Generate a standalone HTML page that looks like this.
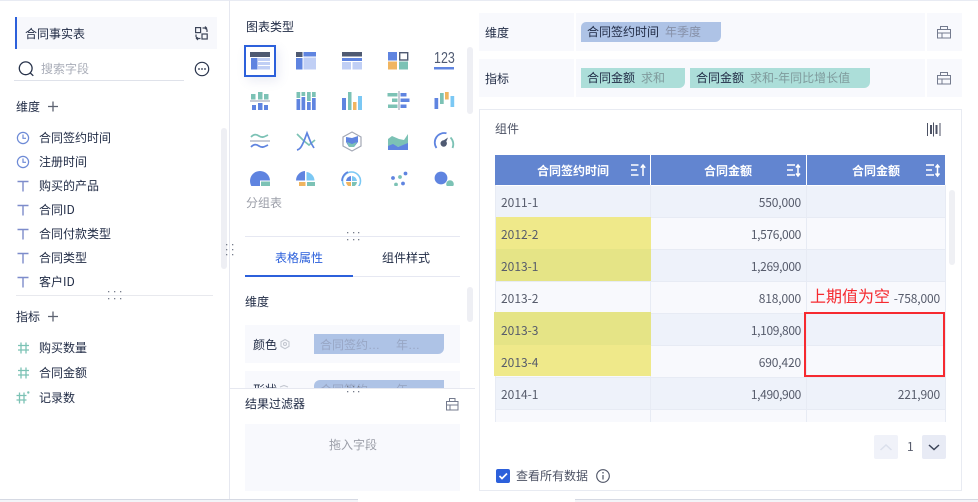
<!DOCTYPE html>
<html lang="zh"><head><meta charset="utf-8"><style>
html,body{margin:0;padding:0;background:#fff}
#p{position:relative;width:978px;height:502px;overflow:hidden;background:#fff;font-family:"Noto Sans CJK SC","Liberation Sans",sans-serif;font-size:12px;color:#1f2a44}
.t{position:absolute;white-space:nowrap;line-height:16px;margin-top:1px}
.b{position:absolute}
.g{color:#9b9ea8}
.r{text-align:right;color:#565b6b;letter-spacing:-.15px}
.w{letter-spacing:-.35px}
.c{color:#565b6b}
.h{color:#fff;font-weight:700;text-align:center}
.e{font-family:"Liberation Sans",sans-serif}
svg{position:absolute;left:0;top:0}
</style></head><body><div id="p">
<!-- frame lines -->
<div class="b" style="left:0;top:0;width:978px;height:1px;background:#e8ebf3"></div>
<div class="b" style="left:229px;top:0;width:1px;height:499px;background:#e6e8f0"></div>
<div class="b" style="left:0;top:499px;width:358px;height:3px;background:#f3f4f8;border-top:1px solid #d5d9e3;box-sizing:border-box"></div>
<div class="b" style="left:575px;top:499px;width:403px;height:3px;background:#f3f4f8;border-top:1px solid #d5d9e3;box-sizing:border-box"></div>

<!-- left panel -->
<div class="b" style="left:15px;top:17px;width:202px;height:32px;background:#f7f8fc"></div>
<div class="b" style="left:15px;top:17px;width:2px;height:32px;background:#2c60db"></div>
<div class="t" style="left:25px;top:25px">合同事实表</div>
<div class="t" style="left:41px;top:60px;color:#a9adb8">搜索字段</div>
<div class="b" style="left:14px;top:80px;width:170px;height:1px;background:#dfe2ea"></div>
<div class="t" style="left:16px;top:98px">维度</div>
<div class="t" style="left:39px;top:129px">合同签约时间</div>
<div class="t" style="left:39px;top:153px">注册时间</div>
<div class="t" style="left:39px;top:177px">购买的产品</div>
<div class="t" style="left:39px;top:201px">合同ID</div>
<div class="t" style="left:39px;top:225px">合同付款类型</div>
<div class="t" style="left:39px;top:249px">合同类型</div>
<div class="t" style="left:39px;top:273px">客户ID</div>
<div class="b" style="left:221px;top:128px;width:6px;height:141px;background:#eeeff4;border-radius:3px"></div>
<div class="b" style="left:16px;top:295px;width:197px;height:1px;background:#e8e9ee"></div>
<div class="t" style="left:16px;top:308px">指标</div>
<div class="t" style="left:39px;top:339px">购买数量</div>
<div class="t" style="left:39px;top:364px">合同金额</div>
<div class="t" style="left:39px;top:389px">记录数</div>

<!-- middle panel -->
<div class="t" style="left:246px;top:18px">图表类型</div>
<div class="b" style="left:244px;top:45px;width:32px;height:32px;box-sizing:border-box;border:2px solid #2c60db;box-shadow:3px 4px 10px rgba(90,110,170,.12)"></div>
<div class="t" style="left:434px;top:49px;font-size:16px;line-height:18px;color:#4f5a72;transform:scaleX(.78);transform-origin:0 0;font-family:'Liberation Sans',sans-serif">123</div>
<div class="t g" style="left:246px;top:194px">分组表</div>
<div class="b" style="left:245px;top:236px;width:215px;height:1px;background:#e6e8f2"></div>
<div class="b" style="left:467px;top:47px;width:6px;height:67px;background:#eeeff4;border-radius:3px"></div>
<div class="t" style="left:275px;top:249px;color:#2c60db">表格属性</div>
<div class="t" style="left:382px;top:249px">组件样式</div>
<div class="b" style="left:245px;top:276px;width:215px;height:1px;background:#e6e8f2"></div>
<div class="b" style="left:245px;top:275px;width:108px;height:2px;background:#2c60db"></div>
<div class="b" style="left:467px;top:287px;width:6px;height:35px;background:#eeeff4;border-radius:3px"></div>
<div class="t" style="left:245px;top:293px">维度</div>
<div class="b" style="left:245px;top:325px;width:215px;height:38px;background:#f8f9fd"></div>
<div class="t" style="left:253px;top:336px">颜色</div>
<div class="b" style="left:314px;top:334px;width:130px;height:20px;background:#aec3e6;border-radius:0 0 6px 0"></div>
<div class="t" style="left:320px;top:336px;color:#98a6c4">合同签约<span class="e">…</span></div>
<div class="t" style="left:396px;top:336px;color:#98a6c4">年<span class="e">…</span></div>
<div class="b" style="left:245px;top:371px;width:215px;height:17px;background:#f8f9fd;overflow:hidden">
  <div class="t" style="left:8px;top:10px">形状</div>
  <div class="b" style="left:69px;top:9px;width:130px;height:20px;background:#aec3e6;border-radius:6px 0 0 0"></div>
  <div class="t" style="left:75px;top:10px;color:#98a6c4">合同签约<span class="e">…</span></div>
  <div class="t" style="left:151px;top:10px;color:#98a6c4">年<span class="e">…</span></div>
</div>
<div class="b" style="left:230px;top:388px;width:245px;height:1px;background:#e6e8f0"></div>
<div class="t" style="left:245px;top:395px">结果过滤器</div>
<div class="b" style="left:245px;top:424px;width:215px;height:67px;background:#f8f9fd"></div>
<div class="t g" style="left:329px;top:436px">拖入字段</div>

<!-- right: field rows -->
<div class="b" style="left:479px;top:13px;width:95px;height:38px;background:#f8f9fd"></div>
<div class="b" style="left:576px;top:13px;width:349px;height:38px;background:#f8f9fd"></div>
<div class="b" style="left:927px;top:13px;width:35px;height:38px;background:#f8f9fd"></div>
<div class="b" style="left:479px;top:59px;width:95px;height:38px;background:#f8f9fd"></div>
<div class="b" style="left:576px;top:59px;width:349px;height:38px;background:#f8f9fd"></div>
<div class="b" style="left:927px;top:59px;width:35px;height:38px;background:#f8f9fd"></div>
<div class="t" style="left:485px;top:24px">维度</div>
<div class="t" style="left:485px;top:70px">指标</div>
<div class="b" style="left:581px;top:22px;width:140px;height:20px;background:#aec3e6;border-radius:5px 0 6px 0"></div>
<div class="t" style="left:587px;top:23px">合同签约时间</div>
<div class="t" style="left:665px;top:23px;color:#8690a8">年季度</div>
<div class="b" style="left:581px;top:68px;width:104px;height:20px;background:#acded9;border-radius:0 0 6px 0"></div>
<div class="t" style="left:587px;top:69px">合同金额</div>
<div class="t" style="left:641px;top:69px;color:#7f9a9c">求和</div>
<div class="b" style="left:690px;top:68px;width:180px;height:20px;background:#acded9;border-radius:0 0 6px 0"></div>
<div class="t" style="left:696px;top:69px">合同金额</div>
<div class="t" style="left:750px;top:69px;color:#7f9a9c">求和-年同比增长值</div>

<!-- component box -->
<div class="b" style="left:479px;top:109px;width:483px;height:382px;box-sizing:border-box;border:1px solid #e8ebf2"></div>
<div class="t" style="left:495px;top:120px;color:#4c5264">组件</div>

<!-- table -->
<div class="b" style="left:495px;top:155px;width:450px;height:30px;background:#6285d0"></div>
<div class="b" style="left:495px;top:186px;width:450px;height:32px;background:#eef2fa"></div>
<div class="b" style="left:495px;top:218px;width:450px;height:32px;background:#f8f9fd"></div>
<div class="b" style="left:495px;top:250px;width:450px;height:32px;background:#eef2fa"></div>
<div class="b" style="left:495px;top:282px;width:450px;height:32px;background:#f8f9fd"></div>
<div class="b" style="left:495px;top:314px;width:450px;height:32px;background:#eef2fa"></div>
<div class="b" style="left:495px;top:346px;width:450px;height:32px;background:#f8f9fd"></div>
<div class="b" style="left:495px;top:378px;width:450px;height:32px;background:#eef2fa"></div>
<div class="b" style="left:495px;top:410px;width:450px;height:12px;background:#f8f9fd"></div>
<div class="b" style="left:495px;top:217px;width:450px;height:1px;background:#e7ebf4"></div>
<div class="b" style="left:495px;top:249px;width:450px;height:1px;background:#e7ebf4"></div>
<div class="b" style="left:495px;top:281px;width:450px;height:1px;background:#e7ebf4"></div>
<div class="b" style="left:495px;top:313px;width:450px;height:1px;background:#e7ebf4"></div>
<div class="b" style="left:495px;top:345px;width:450px;height:1px;background:#e7ebf4"></div>
<div class="b" style="left:495px;top:377px;width:450px;height:1px;background:#e7ebf4"></div>
<div class="b" style="left:495px;top:409px;width:450px;height:1px;background:#e7ebf4"></div>
<div class="b" style="left:495px;top:185px;width:1px;height:237px;background:#e7ebf4"></div>
<div class="b" style="left:650px;top:155px;width:1px;height:267px;background:#e7ebf4"></div>
<div class="b" style="left:806px;top:155px;width:1px;height:267px;background:#e7ebf4"></div>
<div class="b" style="left:945px;top:185px;width:1px;height:237px;background:#e7ebf4"></div>
<div class="b" style="left:650px;top:155px;width:1px;height:30px;background:#fff"></div>
<div class="b" style="left:806px;top:155px;width:1px;height:30px;background:#fff"></div>
<!-- yellow -->
<div class="b" style="left:496px;top:217px;width:155px;height:32px;background:#efe98a"></div>
<div class="b" style="left:496px;top:249px;width:155px;height:32px;background:#e5e486"></div>
<div class="b" style="left:494px;top:312px;width:157px;height:33px;background:#e5e486"></div>
<div class="b" style="left:494px;top:345px;width:157px;height:31px;background:#efe98a"></div>
<!-- header text -->
<div class="t h" style="left:537px;top:162px">合同签约时间</div>
<div class="t h" style="left:704px;top:162px">合同金额</div>
<div class="t h" style="left:852px;top:162px">合同金额</div>
<!-- cells -->
<div class="t c" style="left:501px;top:194px">2011-1</div>
<div class="t c" style="left:501px;top:226px">2012-2</div>
<div class="t c" style="left:501px;top:258px">2013-1</div>
<div class="t c" style="left:501px;top:290px">2013-2</div>
<div class="t c" style="left:501px;top:322px">2013-3</div>
<div class="t c" style="left:501px;top:354px">2013-4</div>
<div class="t c" style="left:501px;top:386px">2014-1</div>
<div class="t r" style="left:701px;width:100px;top:194px">550,000</div>
<div class="t r w" style="left:701px;width:100px;top:226px">1,576,000</div>
<div class="t r w" style="left:701px;width:100px;top:258px">1,269,000</div>
<div class="t r" style="left:701px;width:100px;top:290px">818,000</div>
<div class="t r w" style="left:701px;width:100px;top:322px">1,109,800</div>
<div class="t r" style="left:701px;width:100px;top:354px">690,420</div>
<div class="t r w" style="left:701px;width:100px;top:386px">1,490,900</div>
<div class="t r" style="left:840px;width:100px;top:290px">-758,000</div>
<div class="t r" style="left:840px;width:100px;top:386px">221,900</div>
<div class="t" style="left:810px;top:284px;font-size:16px;line-height:20px;color:#f62a30">上期值为空</div>
<div class="b" style="left:804px;top:312px;width:141px;height:65px;box-sizing:border-box;border:2px solid #f62a30"></div>
<div class="b" style="left:949px;top:190px;width:6px;height:75px;background:#eff0f4;border-radius:3px"></div>

<!-- pager -->
<div class="b" style="left:874px;top:435px;width:24px;height:24px;background:#f0f2f9;border-radius:2px"></div>
<div class="t" style="left:907px;top:438px;color:#565b6b">1</div>
<div class="b" style="left:922px;top:435px;width:24px;height:24px;background:#e8ebf5;border-radius:2px"></div>
<div class="b" style="left:496px;top:469px;width:14px;height:14px;background:#2c60db;border-radius:2px"></div>
<div class="t" style="left:516px;top:467px;color:#4c5264">查看所有数据</div>

<svg width="978" height="502" viewBox="0 0 978 502">
<defs><clipPath id="cl"><rect x="240" y="160" width="225" height="26"/></clipPath></defs>
<!-- switch icon -->
<g fill="none" stroke="#3c4458" stroke-width="1.2">
<rect x="195.600" y="27.600" width="5" height="5"/><rect x="202" y="34" width="5.200" height="5"/>
<path d="M202.500 28h3.500l1 2v2M205 26.500l1.500 1.500-1.500 1M200.500 38.500h-3.500l-1-2v-2M198 40l-1.500-1.500 1.500-1"/>
</g>
<!-- search -->
<g fill="none" stroke="#27324a" stroke-width="1.300"><circle cx="25.700" cy="68.300" r="6.400"/><path d="M30.300 73l3 2.800"/></g>
<g fill="none" stroke="#27324a" stroke-width="1.200"><circle cx="202" cy="69" r="6.700"/></g>
<g fill="#27324a"><circle cx="199" cy="69" r=".9"/><circle cx="202" cy="69" r=".9"/><circle cx="205" cy="69" r=".9"/></g>
<!-- plus -->
<path d="M48 106.500h10M53 101.500v10M48 316.500h10M53 311.500v10" stroke="#5c6270" stroke-width="1.300" fill="none"/>
<!-- field icons -->
<g fill="none" stroke="#6d8ad6" stroke-width="1.200">
<circle cx="23" cy="138" r="5.600"/><path d="M23 134.500v3.800h3"/>
<circle cx="23" cy="162" r="5.600"/><path d="M23 158.500v3.800h3"/>
</g>
<g fill="none" stroke="#7d8ccb" stroke-width="1.400">
<path d="M17.500 181.500h11M23 181.500v10M17.500 205.500h11M23 205.500v10M17.500 229.500h11M23 229.500v10M17.500 253.500h11M23 253.500v10M17.500 277.500h11M23 277.500v10"/>
</g>
<g fill="none" stroke="#7cc2b5" stroke-width="1.300">
<path d="M18 345.500h11M18 350h11M21 342.500v11M26 342.500v11M18 370.500h11M18 375h11M21 367.500v11M26 367.500v11M16.500 395.500h10M16.500 400h10M19.500 392.500v11M24 392.500v11"/>
</g>
<circle cx="28.300" cy="392.500" r="1.200" fill="#7cc2b5"/>
<!-- drag dots -->
<g fill="#777d8c">
<rect x="108" y="291" width="1.300" height="1.300"/><rect x="114" y="291" width="1.300" height="1.300"/><rect x="120" y="291" width="1.300" height="1.300"/>
<rect x="108" y="298" width="1.300" height="1.300"/><rect x="114" y="298" width="1.300" height="1.300"/><rect x="120" y="298" width="1.300" height="1.300"/>
<rect x="226" y="244" width="1.300" height="1.300"/><rect x="232" y="244" width="1.300" height="1.300"/>
<rect x="226" y="249" width="1.300" height="1.300"/><rect x="232" y="249" width="1.300" height="1.300"/>
<rect x="226" y="254" width="1.300" height="1.300"/><rect x="232" y="254" width="1.300" height="1.300"/>
<rect x="347" y="232" width="1.300" height="1.300"/><rect x="353" y="232" width="1.300" height="1.300"/><rect x="358" y="232" width="1.300" height="1.300"/>
<rect x="347" y="239" width="1.300" height="1.300"/><rect x="353" y="239" width="1.300" height="1.300"/><rect x="358" y="239" width="1.300" height="1.300"/>
<rect x="347" y="386" width="1.300" height="1.300"/><rect x="353" y="386" width="1.300" height="1.300"/><rect x="358" y="386" width="1.300" height="1.300"/>
<rect x="347" y="391" width="1.300" height="1.300"/><rect x="353" y="391" width="1.300" height="1.300"/><rect x="358" y="391" width="1.300" height="1.300"/>
</g>

<!-- chart row 1 -->
<rect x="250" y="52" width="20" height="5" fill="#4f5a72"/><rect x="251" y="58" width="6.500" height="11.500" fill="#5f84e0"/>
<rect x="258" y="58" width="12" height="3" fill="#c0cff5"/><rect x="258" y="62" width="12" height="3" fill="#c0cff5"/><rect x="258" y="66" width="12" height="3.500" fill="#c0cff5"/>
<rect x="296" y="52" width="6.500" height="5" fill="#4f5a72"/><rect x="296" y="58" width="6.500" height="11.500" fill="#5f84e0"/>
<rect x="303.500" y="52" width="12.500" height="4.500" fill="#5f84e0"/><rect x="303.500" y="57.500" width="12.500" height="12" fill="#c0cff5"/>
<rect x="342" y="52" width="20" height="4.500" fill="#4f5a72"/><rect x="342" y="58" width="20" height="3" fill="#5f84e0"/>
<rect x="342" y="62" width="9" height="7.500" fill="#c0cff5"/><rect x="352.500" y="62" width="9.500" height="7.500" fill="#c0cff5"/>
<rect x="388" y="52" width="9" height="8.500" fill="#5f84e0"/><rect x="399.700" y="52.700" width="8" height="7.300" fill="#fff" stroke="#4f5a72" stroke-width="1.400"/>
<rect x="388" y="61.500" width="9" height="8" fill="#f0b560"/><rect x="399" y="61.500" width="9" height="8" fill="#7cc2b5"/>
<rect x="434" y="67" width="20" height="2.500" fill="#5f84e0"/>

<!-- chart row 2 -->
<rect x="251" y="94" width="4.500" height="5.500" fill="#7cc2b5"/><rect x="258" y="92" width="4.500" height="7.500" fill="#7cc2b5"/><rect x="264" y="94" width="4.500" height="5.500" fill="#7cc2b5"/>
<rect x="250" y="100" width="20" height="2" fill="#c8ccd6"/>
<rect x="252" y="105" width="4" height="5" fill="#5f84e0"/><rect x="258" y="103" width="4.500" height="7" fill="#5f84e0"/><rect x="264" y="105" width="4" height="5" fill="#5f84e0"/>
<g fill="#5f84e0"><rect x="296.500" y="99" width="3.700" height="11"/><rect x="301.500" y="97" width="3.700" height="13"/><rect x="307" y="102" width="3.700" height="8"/><rect x="312" y="98" width="3.700" height="12"/></g>
<g fill="#7cc2b5"><rect x="296.500" y="92" width="3.700" height="6"/><rect x="301.500" y="92" width="3.700" height="4"/><rect x="307" y="92" width="3.700" height="9"/><rect x="312" y="92" width="3.700" height="5"/></g>
<rect x="342" y="98" width="4" height="12" fill="#5f84e0"/><rect x="348" y="92" width="3.500" height="18" fill="#7cc2b5"/><rect x="353" y="102" width="3.500" height="8" fill="#f0b560"/><rect x="358" y="96" width="4" height="14" fill="#7bc8f4"/>
<rect x="398" y="91" width="2" height="19" fill="#c8ccd6"/>
<rect x="387.500" y="93" width="10" height="3.500" fill="#7cc2b5"/><rect x="400.500" y="93" width="6" height="3.500" fill="#5f84e0"/>
<rect x="392" y="98.500" width="5.500" height="3.500" fill="#7cc2b5"/><rect x="400.500" y="98.500" width="9" height="3.500" fill="#5f84e0"/>
<rect x="388" y="104.500" width="9.500" height="3.500" fill="#7cc2b5"/><rect x="400.500" y="104.500" width="6" height="3.500" fill="#5f84e0"/>
<rect x="434.500" y="98" width="3.700" height="11" fill="#5f84e0"/><rect x="440" y="93" width="3.700" height="11" fill="#7cc2b5"/><rect x="445" y="92" width="3.700" height="7.500" fill="#f0b560"/><rect x="450.500" y="96" width="3.700" height="11" fill="#7bc8f4"/>

<!-- chart row 3 -->
<rect x="250" y="140" width="20" height="2" fill="#c8ccd6"/>
<path d="M251 137c3-3 5-3 8-1s5 1 9-1" fill="none" stroke="#7cc2b5" stroke-width="1.800"/>
<path d="M251 147c3-3 5-3 8-1s5 1 9-1" fill="none" stroke="#5f84e0" stroke-width="1.800"/>
<path d="M297 134l7 7 5 4 6-5" fill="none" stroke="#7cc2b5" stroke-width="1.700"/>
<path d="M297 150c4-1 5-5 7-9l3-8 4 10 3 5" fill="none" stroke="#5f84e0" stroke-width="1.700"/>
<path d="M352 132l9 5v9l-9 5-9-5v-9z" fill="#fff" stroke="#a3a8b5" stroke-width="1.200"/>
<path d="M346 137l6 1 6-2v6l-4 5h-5l-3-5z" fill="#5f84e0"/>
<path d="M347 142l5 2 5-2-3 5h-5z" fill="#7cc2b5"/>
<path d="M388 139l4-3 7 3 5 1 4-6v10l-4 1-6 2-6-2-4 2z" fill="#7cc2b5"/>
<path d="M388 146l5-2 5 3 5-2 5-2v7h-20z" fill="#5f84e0"/>
<path d="M436.500 148a9.500 9.500 0 0 1 10-14.700" fill="none" stroke="#5f84e0" stroke-width="1.800"/>
<path d="M450.500 137.500a9.500 9.500 0 0 1 2 10.500" fill="none" stroke="#7cc2b5" stroke-width="1.800"/>
<circle cx="443.700" cy="143.500" r="3.200" fill="#4f5a72"/><path d="M442 141.500l6-4-3 7z" fill="#4f5a72"/>

<!-- chart row 4 (clipped) -->
<g clip-path="url(#cl)">
<circle cx="260" cy="181" r="10" fill="#5f84e0"/>
<rect x="260.500" y="181" width="10" height="6" fill="#7cc2b5" stroke="#fff" stroke-width="1"/>
<path d="M305 171a9.500 9.500 0 0 0-9 9.500h9z" fill="#5f84e0"/>
<path d="M306.500 172a9 9 0 0 1 8 8.500h-8z" fill="#7bc8f4"/>
<rect x="299" y="182" width="6.500" height="5" fill="#f0b560"/><rect x="307" y="182" width="8" height="5" fill="#7cc2b5"/>
<circle cx="351.500" cy="181" r="9" fill="none" stroke="#7bc8f4" stroke-width="1.600"/>
<path d="M342 181a9.500 9.500 0 0 1 6-9" fill="none" stroke="#5f84e0" stroke-width="1.600"/>
<path d="M351 176a5.500 5.500 0 0 0-5 5h5z" fill="#5f84e0"/><path d="M352 176a5.500 5.500 0 0 1 5 5h-5z" fill="#7bc8f4"/>
<path d="M346 182a5.500 5.500 0 0 0 5 5v-5z" fill="#f0b560"/><path d="M352 182h5a5.500 5.500 0 0 1-5 5z" fill="#7cc2b5"/>
<circle cx="393" cy="178" r="1.900" fill="#5f84e0"/><circle cx="400" cy="177" r="1.900" fill="#7cc2b5"/><circle cx="405.500" cy="173.500" r="1.900" fill="#5f84e0"/>
<circle cx="396" cy="184.500" r="1.900" fill="#7cc2b5"/><circle cx="403" cy="183.500" r="1.900" fill="#5f84e0"/>
<circle cx="441" cy="178" r="6.400" fill="#5f84e0"/><circle cx="450" cy="184" r="3.800" fill="#7cc2b5"/>
</g>

<!-- gear -->
<g fill="none" stroke="#c3c7d0" stroke-width="1.100"><path d="M285 339.500l4 2.300v4.600l-4 2.300-4-2.300v-4.600z"/><circle cx="285" cy="344" r="1.500"/></g>
<path d="M280 387l4-1.500 4 1.500" fill="none" stroke="#c3c7d0" stroke-width="1.100"/>

<!-- toolbox icons -->
<g fill="none" stroke="#747b8e" stroke-width="1">
<path d="M446.500 401.500h11.500v8.500h-11.500zM449.500 401.500v-3h5.500v3M446.500 405h11.500M450 405v5"/>
<path d="M937.500 29.500h13v8.500h-13zM940.500 29.500v-3h7v3M937.500 33h13M942 33v5"/>
<path d="M937.500 75.500h13v8.500h-13zM940.500 75.500v-3h7v3M937.500 79h13M942 79v5"/>
</g>
<!-- columns icon -->
<g fill="#4c5264"><rect x="927" y="123" width="1" height="13"/><rect x="939.500" y="123" width="1" height="13"/><rect x="930" y="125" width="2" height="9"/><rect x="933" y="122.500" width="1" height="14"/><rect x="935.500" y="125" width="2" height="9"/></g>
<!-- header sort -->
<g fill="none" stroke="#fff" stroke-width="1.500">
<path d="M631 165h7.500M631 170h6M631 175h7.500M643 165.500v10.500M640.800 167.800l2.200-2.800 2.200 2.800"/>
<path d="M787 165h8M787 170h6M787 175h8M798 165.500v10M796 167.500l2-2.500 2 2.500M796 173.500l2 2.500 2-2.500"/>
<path d="M926 165h8M926 170h6M926 175h8M937.500 165.500v10M935.500 167.500l2-2.500 2 2.500M935.500 173.500l2 2.500 2-2.500"/>
</g>
<!-- pager chevrons -->
<path d="M880.500 450l5.500-5 5.500 5" fill="none" stroke="#dbe0ec" stroke-width="1.500"/>
<path d="M929 445l5 4.500 5-4.500" fill="none" stroke="#3c4458" stroke-width="1.500"/>
<!-- checkbox tick -->
<path d="M499.500 476l2.500 2.500 5-5" fill="none" stroke="#fff" stroke-width="1.700"/>
<!-- info -->
<circle cx="603" cy="476" r="6.300" fill="none" stroke="#4c5264" stroke-width="1.100"/>
<path d="M603 475v4.500" stroke="#4c5264" stroke-width="1.200"/><circle cx="603" cy="472.800" r=".8" fill="#4c5264"/>
</svg>
</div></body></html>
